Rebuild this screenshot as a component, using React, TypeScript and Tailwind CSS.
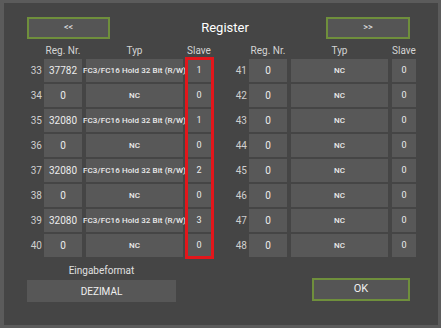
import React from 'react';

type Row = { nr: number; reg: string; typ: string; slave: string };

const left: Row[] = [
  { nr: 33, reg: '37782', typ: 'FC3/FC16 Hold 32 Bit (R/W)', slave: '1' },
  { nr: 34, reg: '0', typ: 'NC', slave: '0' },
  { nr: 35, reg: '32080', typ: 'FC3/FC16 Hold 32 Bit (R/W)', slave: '1' },
  { nr: 36, reg: '0', typ: 'NC', slave: '0' },
  { nr: 37, reg: '32080', typ: 'FC3/FC16 Hold 32 Bit (R/W)', slave: '2' },
  { nr: 38, reg: '0', typ: 'NC', slave: '0' },
  { nr: 39, reg: '32080', typ: 'FC3/FC16 Hold 32 Bit (R/W)', slave: '3' },
  { nr: 40, reg: '0', typ: 'NC', slave: '0' },
];

const right: Row[] = [41, 42, 43, 44, 45, 46, 47, 48].map(nr => ({ nr, reg: '0', typ: 'NC', slave: '0' }));

function Table({ rows, highlight }: { rows: Row[]; highlight?: boolean }) {
  return (
    <div className="relative grid grid-cols-[17px_38px_97px_24px] gap-x-[4px] gap-y-[2px] w-[188px]">
      <div />
      <div className="h-[13px] flex items-center justify-center text-[10px] leading-none text-[#d4d4d4]">Reg. Nr.</div>
      <div className="h-[13px] flex items-center justify-center text-[10px] leading-none text-[#d4d4d4]">Typ</div>
      <div className="h-[13px] flex items-center justify-center text-[10px] leading-none text-[#d4d4d4]">Slave</div>
      {rows.map(r => (
        <React.Fragment key={r.nr}>
          <div className="h-[23px] flex items-center justify-end -mr-[3px] pr-[1px] text-[10px] text-[#cfcfcf]">{r.nr}</div>
          <div className="h-[23px] flex items-center justify-center bg-[#585858] text-[10px] text-[#ececec]">{r.reg}</div>
          <div className="h-[23px] flex items-center justify-center bg-[#585858] text-[8px] font-medium tracking-[0.1px] text-[#ececec] whitespace-nowrap">{r.typ}</div>
          <div className="h-[23px] flex items-center justify-center bg-[#585858] text-[9px] text-[#ececec]">{r.slave}</div>
        </React.Fragment>
      ))}
      {highlight && (
        <div className="absolute left-[162px] top-[13px] w-[29px] h-[202px] border-[3px] border-[#e3161b]" />
      )}
    </div>
  );
}

export default function App() {
  return (
    <div className="w-[441px] h-[328px] bg-[#5b5b5b] pl-[4px] pt-[3px] pr-[3px] pb-[3px]" style={{ fontFamily: 'Roboto, "Liberation Sans", sans-serif' }}>
      <div className="h-full bg-[#454545] flex flex-col">
        <div className="flex items-center justify-between pl-[23px] pr-[28px] pt-[14px]">
          <button className="w-[83px] h-[22px] border-2 border-[#6f8f3c] bg-[#555555] text-[#e8e8e8] text-[9px]">&lt;&lt;</button>
          <div className="text-white text-[13px] ml-[14px]">Register</div>
          <button className="w-[84px] h-[22px] border-2 border-[#6f8f3c] bg-[#555555] text-[#e8e8e8] text-[9px]">&gt;&gt;</button>
        </div>
        <div className="flex gap-[17px] pl-[19px] mt-[5px]">
          <Table rows={left} highlight />
          <Table rows={right} />
        </div>
        <div className="flex items-end justify-between pl-[23px] pr-[28px] mt-[7px]">
          <div className="flex flex-col items-center w-[149px]">
            <div className="text-[10px] text-[#e0e0e0] leading-[14px]">Eingabeformat</div>
            <div className="mt-[2px] w-full h-[22px] bg-[#575757] flex items-center justify-center text-[10px] text-[#f0f0f0]">DEZIMAL</div>
          </div>
          <button className="w-[98px] h-[23px] mb-[1px] border-2 border-[#6f8f3c] bg-[#555555] text-[#f0f0f0] text-[11px]">OK</button>
        </div>
      </div>
    </div>
  );
}
